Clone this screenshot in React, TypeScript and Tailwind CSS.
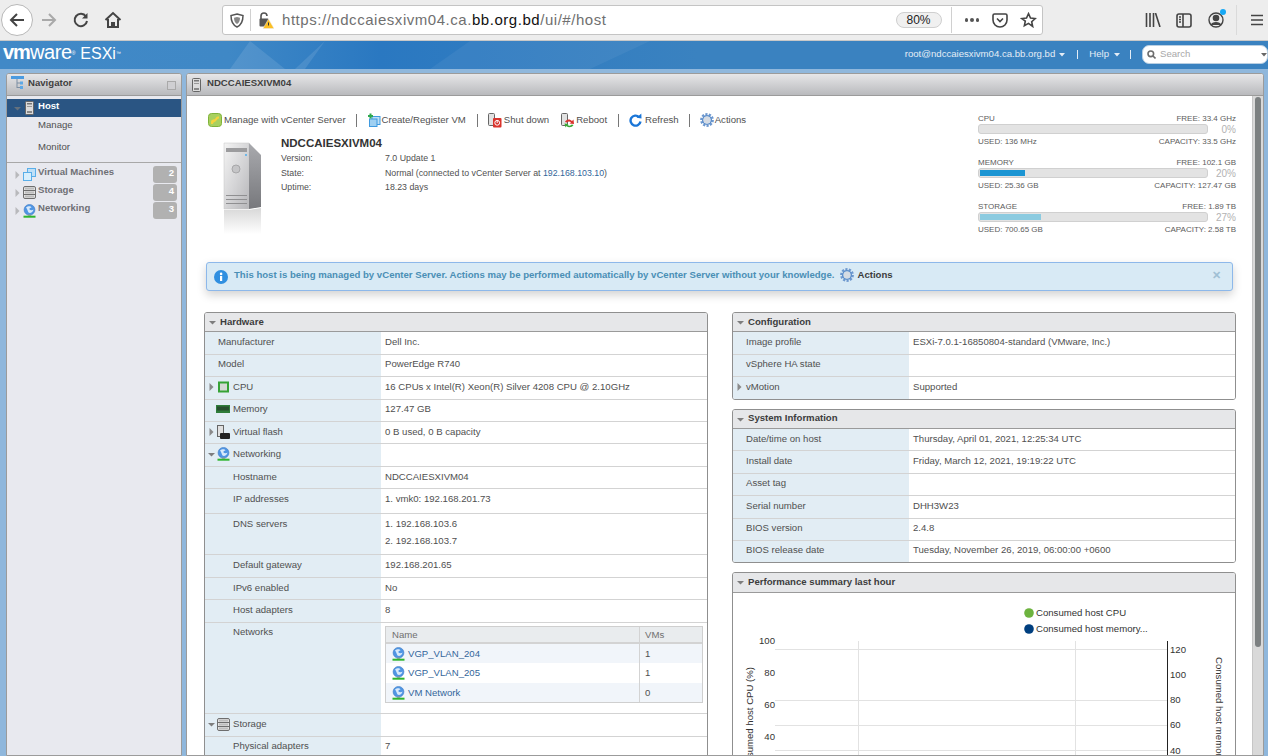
import React from "react";

const Caret = ({ open = false, className = "" }: { open?: boolean; className?: string }) =>
  open ? (
    <svg width="7" height="5" viewBox="0 0 7 5" className={className}><polygon points="0,1 7,1 3.5,4.5" fill="#7d7d7d" /></svg>
  ) : (
    <svg width="5" height="8" viewBox="0 0 5 8" className={className}><polygon points="0.5,0 4.5,4 0.5,8" fill="#8a8a8a" /></svg>
  );

const Globe = ({ className = "" }: { className?: string }) => (
  <svg width="13" height="14" viewBox="0 0 13 14" className={className}>
    <circle cx="6.5" cy="5.8" r="5.4" fill="#4f95e3" stroke="#3a78c4" strokeWidth="0.6" />
    <path d="M3 3.5 C5 1.5 8 2 8.5 3.5 C7 4 6 4.2 6.5 5.5 C7.5 6.5 9.5 6.5 10.5 5.5 C10 8.5 7 9.5 5.5 8.5 C4.5 7 4.5 5 3 3.5Z" fill="#d7e9fb" />
    <rect x="5" y="10.5" width="3" height="1.2" fill="#999" />
    <rect x="0.5" y="11.7" width="12" height="2" fill="#2fb52f" />
  </svg>
);

const Tower = ({ className = "" }: { className?: string }) => (
  <svg width="9" height="14" viewBox="0 0 9 14" className={className}>
    <rect x="0.5" y="0.5" width="8" height="13" rx="1" fill="#dcdcdc" stroke="#666" />
    <rect x="2" y="2" width="5" height="1.5" fill="#777" />
    <rect x="2" y="5" width="5" height="1" fill="#999" />
    <rect x="2" y="10" width="5" height="2" fill="#888" />
  </svg>
);

const StorageIcon = ({ className = "" }: { className?: string }) => (
  <svg width="13" height="13" viewBox="0 0 13 13" className={className}>
    <rect x="0.5" y="0.5" width="12" height="12" rx="1.5" fill="#e2e2e2" stroke="#6e6e6e" />
    <rect x="1" y="4" width="11" height="1" fill="#6e6e6e" />
    <rect x="1" y="8" width="11" height="1" fill="#6e6e6e" />
    <rect x="2" y="1.5" width="9" height="2" fill="#bdbdbd" />
    <rect x="2" y="5.5" width="9" height="2" fill="#bdbdbd" />
    <rect x="2" y="9.5" width="9" height="2" fill="#bdbdbd" />
  </svg>
);

const VmIcon = ({ className = "" }: { className?: string }) => (
  <svg width="13" height="13" viewBox="0 0 13 13" className={className}>
    <rect x="4.5" y="0.5" width="8" height="8" fill="#bfe0f7" stroke="#5aaee8" />
    <rect x="0.5" y="4.5" width="8" height="8" fill="#d9effc" stroke="#5aaee8" />
  </svg>
);

const Gear = ({ className = "" }: { className?: string }) => (
  <svg width="14" height="14" viewBox="0 0 14 14" className={className}>
    <circle cx="7" cy="7" r="5.7" fill="none" stroke="#6d98cf" strokeWidth="2.4" strokeDasharray="2.2 1.3" />
    <circle cx="7" cy="7" r="4.3" fill="none" stroke="#5f8fca" strokeWidth="1.6" />
    <circle cx="7" cy="7" r="3.4" fill="#d5dbe3" />
  </svg>
);

const ManageIcon = () => (
  <svg width="14" height="14" viewBox="0 0 14 14">
    <rect x="0.5" y="0.5" width="13" height="13" rx="3" fill="#a8d05f" stroke="#7fb23a" />
    <path d="M3 9 C3 6 6 7 7 6 C8 5 8 3 11 3.5 L11 5.5 C9 5.5 9 7.5 7.5 8.5 C6 9.5 5 9 5 11 L3 11Z" fill="#f6d33c" />
  </svg>
);

const CreateIcon = () => (
  <svg width="14" height="14" viewBox="0 0 14 14">
    <rect x="5" y="3.5" width="8" height="8" fill="#bfe0f7" stroke="#3f9ae0" />
    <rect x="2.5" y="6" width="7.5" height="7.5" fill="#9fd0f2" stroke="#3f9ae0" />
    <path d="M3.5 0.5v5M1 3h5" stroke="#2fa84f" strokeWidth="2" />
  </svg>
);

const ShutIcon = () => (
  <svg width="14" height="15" viewBox="0 0 14 15">
    <rect x="0.5" y="0.5" width="6" height="12" rx="1" fill="#e2e2e2" stroke="#666" />
    <rect x="5" y="5" width="8.5" height="9.5" rx="1" fill="#d9332c" />
    <circle cx="9.2" cy="9.8" r="2.4" fill="none" stroke="#fff" />
    <path d="M9.2 7v3" stroke="#fff" />
  </svg>
);

const RebootIcon = () => (
  <svg width="14" height="15" viewBox="0 0 14 15">
    <rect x="0.5" y="0.5" width="6" height="12" rx="1" fill="#e2e2e2" stroke="#666" />
    <path d="M4 9 C5 6 9 5.5 11 8 L12.5 6.5 L13 11 L8.5 10.5 L10 9.2 C8.8 8 6.8 8.2 6 9.5Z" fill="#d9332c" />
    <path d="M12.5 12 C11 14.5 7.5 15 5.5 13 L4.5 14.5 L3.5 10.5 L7.5 11 L6.5 12 C8 13 9.8 13 10.8 11.6Z" fill="#39a935" />
  </svg>
);

const RefreshIcon = () => (
  <svg width="13" height="14" viewBox="0 0 13 14">
    <path d="M10 4 A5 5 0 1 0 11.5 8.5" fill="none" stroke="#1a76d8" strokeWidth="2.4" />
    <polygon points="7.5,4.8 12.5,5.5 12.3,0.5" fill="#1a76d8" />
  </svg>
);

const Sep = ({ className = "ml-[11px] mr-[10px]" }: { className?: string }) => <span className={`w-px h-[13px] bg-[#777] shrink-0 ${className}`} />;

const Tool = ({ icon, label, w = "w-[16px]" }: { icon: React.ReactNode; label: string; w?: string }) => (
  <div className="flex items-center shrink-0">
    <span className={`${w} flex items-center`}>{icon}</span>
    <span className="whitespace-nowrap">{label}</span>
  </div>
);

const Stat = ({ name, free, pct, used, cap, fill, w, gap }: { name: string; free: string; pct: string; used: string; cap: string; fill: string; w: number; gap: string }) => (
  <div className={gap}>
    <div className="flex justify-between h-[10px] leading-[10px]"><span>{name}</span><span>{free}</span></div>
    <div className="flex justify-between items-center h-[10px]">
      <div className="w-[230px] h-[10px] rounded-[3px] border border-[#d0d0d0] bg-[#e3e3e3] overflow-hidden p-px">
        <div className={`h-full ${fill}`} style={{ width: w }} />
      </div>
      <span className="text-[10px] text-[#b2b2b2]">{pct}</span>
    </div>
    <div className="flex justify-between h-[10px] leading-[10px] mt-[3px]"><span>{used}</span><span>{cap}</span></div>
  </div>
);

const Row = ({ h, icon, caret, indent, label, children, last, up }: { h: string; icon?: React.ReactNode; caret?: "open" | "closed"; indent?: boolean; label: string; children?: React.ReactNode; last?: boolean; up?: boolean }) => (
  <div className={`flex ${h} ${last ? "" : "border-b border-[#d3d3d3]"}`}>
    <div className={`w-[176px] shrink-0 bg-[#e2edf4] flex items-start leading-[12px] relative ${up ? "pt-[3px]" : "pt-[4px]"}`}>
      {caret && (
        <span className="absolute left-[2px] top-[5px] w-[9px] h-[10px] flex items-center justify-center">
          <Caret open={caret === "open"} />
        </span>
      )}
      {icon ? (
        <span className="ml-[12px] w-[16px] h-[12px] flex items-center shrink-0">{icon}</span>
      ) : (
        <span className={indent ? "ml-[28px]" : "ml-[13px]"} />
      )}
      <span className="whitespace-nowrap">{label}</span>
    </div>
    <div className={`flex-1 pl-[4px] leading-[12px] bg-white ${up ? "pt-[3px]" : "pt-[4px]"}`}>{children}</div>
  </div>
);

const Panel = ({ title, children, className = "", head = "h-[19px]", titleClass = "" }: { title: string; children: React.ReactNode; className?: string; head?: string; titleClass?: string }) => (
  <div className={`rounded-[3px] border border-[#8f8f8f] overflow-hidden bg-white ${className}`}>
    <div className={`${head} bg-[#e6e7e9] border-b border-[#9a9a9a] flex items-center pl-[4px] font-bold text-[#3c3c3c]`}>
      <Caret open className="mr-[3px]" />
      <span className={`ml-px ${titleClass}`}>{title}</span>
    </div>
    {children}
  </div>
);

const NetRow = ({ name, vms, bg, h = "h-[19px]" }: { name: string; vms: string; bg: string; h?: string }) => (
  <div className={`flex ${h} items-center ${bg}`}>
    <div className="w-[254px] pl-[6px] flex items-center border-r border-[#d3d3d3] h-full">
      <Globe className="mr-[3px]" />
      <span className="text-[#33669a]">{name}</span>
    </div>
    <div className="pl-[5px]">{vms}</div>
  </div>
);

const NavItem = ({ icon, label, n }: { icon: React.ReactNode; label: string; n: string }) => (
  <div className="flex h-[18px] relative">
    <span className="w-[8px] ml-[8px] pt-[5px]"><Caret className="opacity-50" /></span>
    <span className="w-[15px] pt-[2px]">{icon}</span>
    <span className="font-bold text-[#6f7075] leading-[12px]">{label}</span>
    <span className="absolute left-[146px] top-0 w-[24px] h-[17px] rounded-[3px] bg-[#b1b1b1] text-white font-bold text-right pr-[3px] leading-[13px]">{n}</span>
  </div>
);

const ServerArt = () => (
  <svg width="40" height="92" viewBox="0 0 40 92" className="shrink-0">
    <defs>
      <linearGradient id="front" x1="0" y1="0" x2="1" y2="1">
        <stop offset="0" stopColor="#f4f4f4" />
        <stop offset="0.55" stopColor="#d3d3d5" />
        <stop offset="1" stopColor="#b6b6b9" />
      </linearGradient>
      <linearGradient id="side" x1="0" y1="0" x2="0" y2="1">
        <stop offset="0" stopColor="#a9aaae" />
        <stop offset="1" stopColor="#77787c" />
      </linearGradient>
      <linearGradient id="refl" x1="0" y1="0" x2="0" y2="1">
        <stop offset="0" stopColor="#d8d8d8" />
        <stop offset="1" stopColor="#ffffff" />
      </linearGradient>
    </defs>
    <polygon points="2,1 27,1 27,67 2,67" fill="url(#front)" stroke="#c4c4c4" strokeWidth="0.5" />
    <polygon points="27,1 39,13 39,65 27,67" fill="url(#side)" />
    <rect x="4" y="6" width="21" height="4" fill="#9c9c9e" />
    <circle cx="14" cy="27" r="4" fill="#c5c5c7" stroke="#a7a7a9" />
    <rect x="23" y="12" width="2" height="2" fill="#6fb7e8" />
    <rect x="4" y="53" width="21" height="1" fill="#8f8f91" />
    <rect x="4" y="57" width="21" height="1" fill="#8f8f91" />
    <rect x="4" y="61" width="21" height="1" fill="#8f8f91" />
    <polygon points="2,68 27,68 39,66 39,92 2,92" fill="url(#refl)" />
  </svg>
);

const Chart = () => {
  const ox = 733;
  const oy = 593;
  const t = "fill-[#333] text-[9.6px]";
  return (
    <svg width="502" height="165" viewBox={`${ox} ${oy} 502 165`} className="block">
      <circle cx="1029" cy="613" r="4.8" fill="#6db33f" />
      <text x="1036" y="616" className={t}>Consumed host CPU</text>
      <circle cx="1029" cy="629" r="4.8" fill="#003f7f" />
      <text x="1036" y="632" className={t}>Consumed host memory...</text>
      {[649, 700, 725, 750].map((y) => (
        <line key={y} x1="775" x2="1167" y1={y + 0.5} y2={y + 0.5} stroke="#e2e2e2" />
      ))}
      <line x1="858.5" x2="858.5" y1="641" y2="758" stroke="#e2e2e2" />
      <line x1="1075.5" x2="1075.5" y1="641" y2="758" stroke="#e2e2e2" />
      <line x1="1167.5" x2="1167.5" y1="641" y2="758" stroke="#222" />
      {[["100", 644], ["80", 676], ["60", 708], ["40", 740]].map(([l, y]) => (
        <text key={l} x="775" y={y} textAnchor="end" className={t}>{l}</text>
      ))}
      {[["120", 653], ["100", 678], ["80", 703], ["60", 728], ["40", 754]].map(([l, y]) => (
        <text key={l} x="1170" y={y} className={t}>{l}</text>
      ))}
      <text transform="translate(753,667) rotate(-90)" textAnchor="end" className={t}>Consumed host CPU (%)</text>
      <text transform="translate(1216,657) rotate(90)" className={t}>Consumed host memory (GB)</text>
    </svg>
  );
};

export default function App() {
  return (
    <div className="w-[1268px] h-[756px] overflow-hidden bg-[#8fb7dc] [font-family:'Liberation_Sans',sans-serif] text-[9.6px] text-[#505050]">
      {/* browser chrome */}
      <div className="h-[41px] bg-[#ededed] border-b border-[#c8c8c8] flex items-center">
        <div className="w-[32px] h-[32px] ml-px rounded-full bg-white border border-[#b8b8b8] flex items-center justify-center shrink-0">
          <svg width="18" height="18" viewBox="0 0 18 18" fill="none" stroke="#444" strokeWidth="2"><path d="M16 9H3M9 3L3 9l6 6" /></svg>
        </div>
        <div className="w-[32px] flex justify-center shrink-0">
          <svg width="18" height="18" viewBox="0 0 18 18" fill="none" stroke="#a9a9a9" strokeWidth="2"><path d="M2 9h13M9 3l6 6-6 6" /></svg>
        </div>
        <div className="w-[32px] flex justify-center shrink-0">
          <svg width="18" height="18" viewBox="0 0 18 18" fill="none" stroke="#444" strokeWidth="2"><path d="M14 5.5A6.2 6.2 0 1 0 15 10" /><polygon points="15.5,2 15.5,7.5 10,7.5" fill="#444" stroke="none" /></svg>
        </div>
        <div className="w-[32px] flex justify-center shrink-0">
          <svg width="18" height="18" viewBox="0 0 18 18" fill="none" stroke="#444" strokeWidth="2"><path d="M1.5 9L9 2l7.5 7" /><path d="M4 8v8h4v-4h2v4h4V8" /></svg>
        </div>
        <div className="w-[821px] h-[30px] ml-[93px] bg-white rounded-[3px] border border-[#c4c4c4] flex items-center shrink-0">
          <svg width="14" height="15" viewBox="0 0 14 15" fill="none" className="ml-[7px]"><path d="M7 1l6 1.5c0 6-1.5 9.500-6 11.500C2.500 12 1 8.500 1 2.500z" stroke="#555" strokeWidth="1.500" /><path d="M7 4l3 .8c0 3-.8 5-3 6.200-2.200-1.200-3-3.200-3-6.200z" fill="#888" /></svg>
          <span className="w-px h-[22px] bg-[#d0d0d0] ml-[6px]" />
          <svg width="16" height="18" viewBox="0 0 16 18" className="ml-[7px]"><path d="M3 8V5a3 3 0 0 1 6 0" fill="none" stroke="#555" strokeWidth="1.600" /><rect x="1.500" y="7.500" width="9" height="8" rx="1" fill="#555" /><polygon points="10.500,8 16,17.500 5,17.500" fill="#fbbf24" stroke="#ededed" strokeWidth="0.500" /><rect x="10" y="11.500" width="1" height="3" fill="#333" /></svg>
          <div className="ml-[8px] text-[15px] tracking-[0.54px] text-[#707070] whitespace-nowrap">https://ndccaiesxivm04.ca.<span className="text-[#111]">bb.org.bd</span>/ui/#/host</div>
          <div className="ml-auto w-[46px] h-[16px] rounded-full bg-[#f0f0f0] border border-[#cfcfcf] text-[12px] leading-[14px] text-[#222] text-center">80%</div>
          <span className="w-px h-[26px] bg-[#d0d0d0] ml-[9px]" />
          <span className="ml-[13px] flex gap-[2px]"><i className="w-[3.500px] h-[3.500px] rounded-full bg-[#555]" /><i className="w-[3.500px] h-[3.500px] rounded-full bg-[#555]" /><i className="w-[3.500px] h-[3.500px] rounded-full bg-[#555]" /></span>
          <svg width="16" height="15" viewBox="0 0 16 15" fill="none" stroke="#444" strokeWidth="1.600" className="ml-[13px]"><path d="M1 2.500a1.500 1.500 0 0 1 1.500-1.500h11a1.500 1.500 0 0 1 1.500 1.500V7a7 7 0 0 1-14 0z" /><path d="M5 5.500L8 8.500l3-3" /></svg>
          <svg width="17" height="16" viewBox="0 0 24 24" fill="none" stroke="#444" strokeWidth="2.400" className="ml-[12px] mr-[5px]"><path d="M12 2.500l3 6.500 7 .8-5.200 4.800 1.400 7L12 17.100l-6.200 3.500 1.400-7L2 9.800 9 9z" /></svg>
        </div>
        <div className="ml-[102px] flex items-center shrink-0">
          <svg width="16" height="14" viewBox="0 0 16 14" stroke="#444" strokeWidth="1.600" fill="none"><path d="M1.500 0v14M5 0v14M8.500 0v14M10.500 0l4.500 14" /></svg>
          <svg width="16" height="15" viewBox="0 0 16 15" fill="none" stroke="#444" strokeWidth="1.600" className="ml-[15px]"><rect x="1" y="1" width="14" height="13" rx="2" /><path d="M7 1v13M3 4h2M3 6.500h2M3 9h2" /></svg>
          <div className="relative ml-[16px]">
            <svg width="16" height="16" viewBox="0 0 16 16" fill="none" stroke="#444" strokeWidth="1.400"><circle cx="8" cy="8" r="7" /><circle cx="8" cy="6" r="2.600" fill="#444" /><path d="M3.500 13c1-3 8-3 9 0" fill="#444" /></svg>
            <span className="absolute -right-[2px] -top-[3px] w-[6px] h-[6px] rounded-full bg-[#16a8f5]" />
          </div>
          <span className="w-px h-[30px] bg-[#dadada] ml-[12px]" />
          <svg width="14" height="12" viewBox="0 0 14 12" stroke="#444" strokeWidth="1.700" className="ml-[13px]"><path d="M1 1.500h12M1 6h12M1 10.500h12" /></svg>
        </div>
      </div>

      {/* ESXi header */}
      <div className="relative h-[28px] pb-px bg-[linear-gradient(90deg,#4189c7_0%,#3f88c6_18%,#2a78c1_30%,#3a82c0_55%,#3a82c0_100%)] flex items-center overflow-hidden text-[#e4edf6]">
        <svg width="460" height="28" viewBox="0 0 460 28" className="absolute left-[200px] top-0 opacity-10">
          <polygon points="30,28 50,0 85,28" fill="#fff" />
          <polygon points="95,28 125,0 105,28" fill="#fff" />
          <polygon points="230,28 270,0 450,0 390,28" fill="#fff" opacity="0.5" />
        </svg>
        <div className="relative ml-[3px] text-white leading-[28px] whitespace-nowrap -mt-[1px]">
          <span className="text-[20px] font-bold tracking-[-1px]">vm</span><span className="text-[20px] tracking-[-0.4px]">ware</span><span className="text-[5px] align-super">®</span>
          <span className="ml-[5px] text-[16px]">ESXi</span><span className="text-[5px] align-super">™</span>
        </div>
        <div className="relative ml-auto flex items-center whitespace-nowrap">
          <span>root@ndccaiesxivm04.ca.bb.org.bd</span>
          <svg width="6" height="4" viewBox="0 0 6 4" className="ml-[4px]"><polygon points="0,0 6,0 3,3.500" fill="#e4edf6" /></svg>
          <span className="w-px h-[9px] bg-[#e4edf6] ml-[12px]" />
          <span className="ml-[11px]">Help</span>
          <svg width="6" height="4" viewBox="0 0 6 4" className="ml-[5px]"><polygon points="0,0 6,0 3,3.500" fill="#e4edf6" /></svg>
          <span className="w-px h-[9px] bg-[#e4edf6] ml-[10px]" />
          <div className="w-[126px] h-[19px] ml-[11px] bg-white rounded-[7px] border border-[#b9cfe2] flex items-center text-[#a8a8a8] relative">
            <svg width="9" height="9" viewBox="0 0 9 9" fill="none" stroke="#6d6d6d" strokeWidth="1.600" className="ml-[4px]"><circle cx="3.800" cy="3.800" r="2.800" /><path d="M6 6l2.500 2.500" /></svg>
            <span className="ml-[4px]">Search</span>
            <svg width="6" height="4" viewBox="0 0 6 4" className="absolute right-[0px] top-[7px]"><polygon points="0,0 6,0 3,3.500" fill="#666" /></svg>
          </div>
        </div>
      </div>

      {/* body */}
      <div className="flex pt-[4px] pl-[6px] pr-[4px] h-[687px] gap-[4px]">
        {/* navigator */}
        <div className="w-[176px] shrink-0 rounded-t-[3px] border border-[#9b9b9b] bg-[#e8e9ef] overflow-hidden">
          <div className="h-[22px] bg-[linear-gradient(#e6e6e8,#b9babd)] border-b border-[#9b9b9b] flex items-center text-[#3f3f3f] font-bold relative">
            <svg width="14" height="14" viewBox="0 0 14 14" fill="none" className="ml-[4px] mr-[3px] -mt-[4px]">
              <rect x="0" y="0" width="13" height="3" fill="#4b9be0" />
              <path d="M6 3v9M6 7h3M6 11.500h3" stroke="#7d8fa3" />
              <rect x="9" y="5.500" width="3" height="3" fill="#5da8e5" />
              <rect x="9" y="10" width="3" height="3" fill="#5da8e5" />
            </svg>
            <span className="-mt-[2px]">Navigator</span>
            <span className="absolute right-[5px] top-[7px] w-[9px] h-[9px] border border-[#a9a9a9] bg-[#cfcfd2]" />
          </div>
          <div className="mt-[3px] h-[18px] bg-[#2a5583] flex items-center text-white font-bold">
            <Caret open className="ml-[7px] opacity-70" />
            <Tower className="ml-[4px]" />
            <span className="ml-[4px] -mt-[3px]">Host</span>
          </div>
          <div className="pl-[31px] h-[16px] leading-[16px]">Manage</div>
          <div className="pl-[31px] h-[16px] leading-[16px] mt-[6px]">Monitor</div>
          <div className="mt-[7px] border-t border-[#a8a8a8] pt-[3px]">
            <NavItem icon={<VmIcon />} label="Virtual Machines" n="2" />
            <NavItem icon={<StorageIcon />} label="Storage" n="4" />
            <NavItem icon={<Globe />} label="Networking" n="3" />
          </div>
        </div>

        {/* main */}
        <div className="flex-1 rounded-t-[3px] border border-[#9b9b9b] bg-white overflow-hidden flex flex-col">
          <div className="h-[22px] bg-[linear-gradient(#e6e6e8,#b9babd)] border-b border-[#9b9b9b] flex items-center pl-[5px] font-bold text-[#3f3f3f] shrink-0">
            <Tower />
            <span className="ml-[6px] -mt-[2px]">NDCCAIESXIVM04</span>
          </div>
          <div className="flex flex-1 min-h-0">
            <div className="flex-1 min-w-0">
              <div className="flex h-[166px]">
                <div className="flex-1 min-w-0">
                  <div className="pt-[14px] pl-[21px] flex items-center h-[34px]">
                    <Tool icon={<ManageIcon />} label="Manage with vCenter Server" />
                    <Sep className="ml-[10px] mr-[10px]" />
                    <Tool icon={<CreateIcon />} label="Create/Register VM" w="w-[15px]" />
                    <Sep />
                    <Tool icon={<ShutIcon />} label="Shut down" />
                    <span className="w-[12px] shrink-0" />
                    <Tool icon={<RebootIcon />} label="Reboot" w="w-[15px]" />
                    <Sep />
                    <Tool icon={<RefreshIcon />} label="Refresh" />
                    <Sep className="ml-[10px] mr-[10px]" />
                    <Tool icon={<Gear />} label="Actions" w="w-[15px]" />
                  </div>
                  <div className="flex pl-[35px] mt-[6px]">
                    <div className="mt-[6px]"><ServerArt /></div>
                    <div className="ml-[19px]">
                      <div className="h-[14px] leading-[14px] font-bold text-[11.5px] text-[#333] mb-px">NDCCAIESXIVM04</div>
                      {[
                        ["Version:", <>7.0 Update 1</>],
                        ["State:", <>Normal (connected to vCenter Server at <span className="text-[#33669a]">192.168.103.10</span>)</>],
                        ["Uptime:", <>18.23 days</>],
                      ].map(([k, v], i) => (
                        <div key={i} className="flex h-[14.5px] leading-[14.5px] text-[8.8px]">
                          <span className="w-[104px]">{k}</span>
                          <span>{v}</span>
                        </div>
                      ))}
                    </div>
                  </div>
                </div>
                <div className="w-[258px] mr-[16px] pt-[18px] text-[8px] text-[#5c5c5c] shrink-0">
                  <Stat name="CPU" free="FREE: 33.4 GHz" pct="0%" used="USED: 136 MHz" cap="CAPACITY: 33.5 GHz" fill="bg-transparent" w={0} gap="" />
                  <Stat name="MEMORY" free="FREE: 102.1 GB" pct="20%" used="USED: 25.36 GB" cap="CAPACITY: 127.47 GB" fill="bg-[#1b95d3]" w={45} gap="mt-[11px]" />
                  <Stat name="STORAGE" free="FREE: 1.89 TB" pct="27%" used="USED: 700.65 GB" cap="CAPACITY: 2.58 TB" fill="bg-[#8ccbe0]" w={61} gap="mt-[11px]" />
                </div>
              </div>

              <div className="ml-[19px] mr-[19px] h-[29px] pb-[3px] rounded-[3px] border border-[#8db8ea] bg-[#d8eaf5] shadow-[0_4px_10px_rgba(0,0,0,0.18)] flex items-center font-bold text-[#4a8fb5]">
                <svg width="14" height="14" viewBox="0 0 14 14" className="ml-[7px] mr-[6px] mt-[3px]">
                  <circle cx="7" cy="7" r="7" fill="#2f8fe0" />
                  <rect x="6" y="6" width="2.200" height="5" fill="#fff" />
                  <circle cx="7.100" cy="3.900" r="1.300" fill="#fff" />
                </svg>
                <span className="whitespace-nowrap">This host is being managed by vCenter Server. Actions may be performed automatically by vCenter Server without your knowledge.</span>
                <Gear className="ml-[6px] mr-[3px]" />
                <span className="text-[#3c3c3c]">Actions</span>
                <span className="ml-auto mr-[11px] text-[#9fc0d4] text-[11px]">✕</span>
              </div>

              <div className="mt-[21px] pl-[17px] flex gap-[24px] items-start">
                <Panel title="Hardware" className="w-[504px] shrink-0">
                  <Row h="h-[23px]" label="Manufacturer">Dell Inc.</Row>
                  <Row h="h-[22px]" up label="Model">PowerEdge R740</Row>
                  <Row h="h-[23px]" caret="closed" label="CPU" icon={
                    <svg width="13" height="12" viewBox="0 0 13 12"><rect x="1" y="0.500" width="11" height="11" fill="#36a336" /><rect x="3" y="2.500" width="7" height="7" fill="#d6dad6" /></svg>
                  }>16 CPUs x Intel(R) Xeon(R) Silver 4208 CPU @ 2.10GHz</Row>
                  <Row h="h-[22px]" up label="Memory" icon={
                    <svg width="14" height="10" viewBox="0 0 14 10" className="-ml-px"><rect x="0" y="1" width="14" height="8" fill="#2f7d3a" /><path d="M2 2.500v4M4 2.500v4M6 2.500v4M8 2.500v4M10 2.500v4M12 2.500v4" stroke="#222" /></svg>
                  }>127.47 GB</Row>
                  <Row h="h-[22px]" caret="closed" label="Virtual flash" icon={
                    <svg width="13" height="14" viewBox="0 0 13 14"><rect x="0.500" y="0.500" width="6" height="11" fill="#e0e0e0" stroke="#666" /><rect x="3" y="8" width="10" height="6" rx="1" fill="#222" /></svg>
                  }>0 B used, 0 B capacity</Row>
                  <Row h="h-[23px]" caret="open" label="Networking" icon={<Globe />} />
                  <Row h="h-[22px]" indent label="Hostname">NDCCAIESXIVM04</Row>
                  <Row h="h-[25px]" indent label="IP addresses">1. vmk0: 192.168.201.73</Row>
                  <Row h="h-[41px]" indent label="DNS servers">
                    <div className="h-[16.500px] leading-[16.500px] -mt-[2px]">1. 192.168.103.6</div>
                    <div className="h-[16.500px] leading-[16.500px]">2. 192.168.103.7</div>
                  </Row>
                  <Row h="h-[23px]" indent label="Default gateway">192.168.201.65</Row>
                  <Row h="h-[22px]" indent label="IPv6 enabled">No</Row>
                  <Row h="h-[23px]" indent label="Host adapters">8</Row>
                  <Row h="h-[91px]" up indent label="Networks">
                    <div className="w-[318px] border border-[#cfcfcf]">
                      <div className="flex h-[17px] bg-[#e9ecee] border-b-2 border-[#d3d3d3] text-[#6f6f6f]">
                        <div className="w-[254px] pl-[6px] border-r border-[#d3d3d3] leading-[15px]">Name</div>
                        <div className="pl-[5px] leading-[15px]">VMs</div>
                      </div>
                      <NetRow name="VGP_VLAN_204" vms="1" bg="bg-[#f1f5fa]" />
                      <NetRow name="VGP_VLAN_205" vms="1" bg="bg-white" h="h-[20px]" />
                      <NetRow name="VM Network" vms="0" bg="bg-[#f1f5fa]" />
                    </div>
                  </Row>
                  <Row h="h-[23px]" caret="open" label="Storage" icon={<StorageIcon />} />
                  <Row h="h-[22px]" up indent label="Physical adapters">7</Row>
                </Panel>

                <div className="w-[504px] shrink-0">
                  <Panel title="Configuration">
                    <Row h="h-[23px]" label="Image profile">ESXi-7.0.1-16850804-standard (VMware, Inc.)</Row>
                    <Row h="h-[22px]" up label="vSphere HA state" />
                    <Row h="h-[22px]" last caret="closed" label="vMotion">Supported</Row>
                  </Panel>
                  <Panel title="System Information" className="mt-[9px]" titleClass="-mt-[2px]">
                    <Row h="h-[22px]" label="Date/time on host">Thursday, April 01, 2021, 12:25:34 UTC</Row>
                    <Row h="h-[23px]" label="Install date">Friday, March 12, 2021, 19:19:22 UTC</Row>
                    <Row h="h-[22px]" up label="Asset tag" />
                    <Row h="h-[23px]" label="Serial number">DHH3W23</Row>
                    <Row h="h-[22px]" up label="BIOS version">2.4.8</Row>
                    <Row h="h-[21px]" up last label="BIOS release date">Tuesday, November 26, 2019, 06:00:00 +0600</Row>
                  </Panel>
                  <Panel title="Performance summary last hour" className="mt-[9px]" head="h-[20px]" titleClass="-mt-px">
                    <Chart />
                  </Panel>
                </div>
              </div>
            </div>

            <div className="w-[11px] shrink-0 bg-[#d9d9d9] border-l border-[#c6c6c6] px-[2px] pt-px">
              <div className="h-[550px] rounded-[3px] bg-[#7c8081]" />
            </div>
          </div>
        </div>
      </div>
    </div>
  );
}
